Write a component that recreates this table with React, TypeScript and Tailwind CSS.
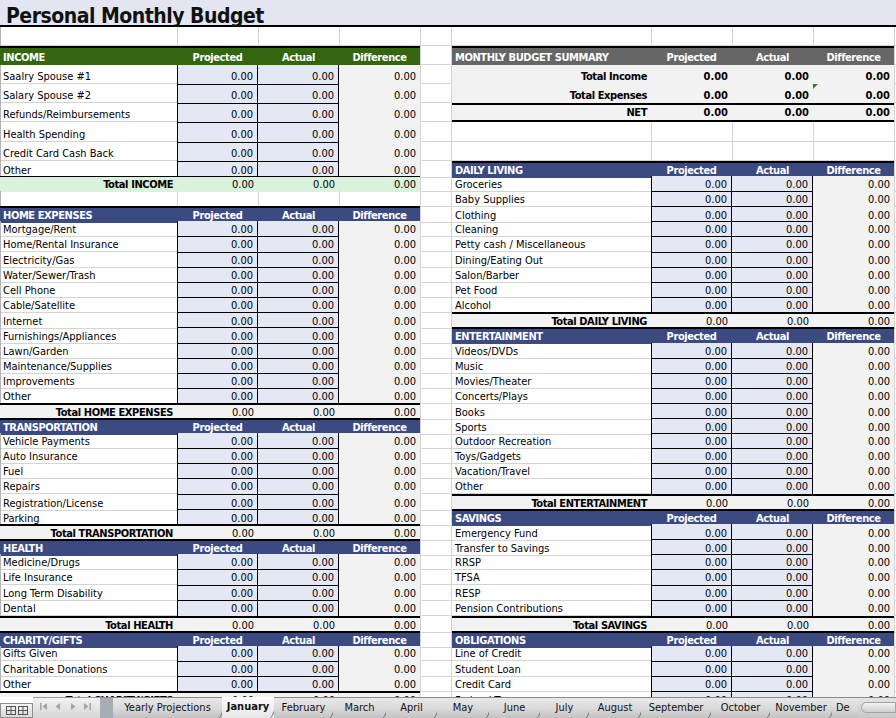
type Tone = "green" | "blue" | "gray";
type Half =
  | { t: "head"; title: string; tone: Tone }
  | { t: "item"; label: string; first?: boolean }
  | { t: "total"; label: string; green?: boolean }
  | { t: "sum"; label: string; net?: boolean; flag?: boolean }
  | { t: "blank" };

const H: Record<number, string> = {
  15: "h-[15px]",
  16: "h-[16px]",
  19: "h-[19px]",
  20: "h-[20px]",
};

const TONES: Record<Tone, string> = {
  green: "bg-[#34650f]",
  blue: "bg-[#3b4a81]",
  gray: "bg-[#666666]",
};

const hd = (title: string, tone: Tone = "blue"): Half => ({ t: "head", title, tone });
const it = (label: string, first = false): Half => ({ t: "item", label, first });
const tot = (label: string, green = false): Half => ({ t: "total", label, green });
const blank: Half = { t: "blank" };

// rows 2..44, left block then right block
const rows: [number, Half, Half][] = [
  [19, blank, blank],
  [19, hd("INCOME", "green"), hd("MONTHLY BUDGET SUMMARY", "gray")],
  [19, it("Saalry Spouse #1", true), { t: "sum", label: "Total Income" }],
  [19, it("Salary Spouse #2"), { t: "sum", label: "Total Expenses", flag: true }],
  [19, it("Refunds/Reimbursements"), { t: "sum", label: "NET", net: true }],
  [20, it("Health Spending"), blank],
  [19, it("Credit Card Cash Back"), blank],
  [15, it("Other"), hd("DAILY LIVING")],
  [15, tot("Total INCOME", true), it("Groceries", true)],
  [15, blank, it("Baby Supplies")],
  [15, hd("HOME EXPENSES"), it("Clothing")],
  [15, it("Mortgage/Rent", true), it("Cleaning")],
  [16, it("Home/Rental Insurance"), it("Petty cash / Miscellaneous")],
  [15, it("Electricity/Gas"), it("Dining/Eating Out")],
  [15, it("Water/Sewer/Trash"), it("Salon/Barber")],
  [15, it("Cell Phone"), it("Pet Food")],
  [15, it("Cable/Satellite"), it("Alcohol")],
  [15, it("Internet"), tot("Total DAILY LIVING")],
  [16, it("Furnishings/Appliances"), hd("ENTERTAINMENT")],
  [15, it("Lawn/Garden"), it("Videos/DVDs", true)],
  [15, it("Maintenance/Supplies"), it("Music")],
  [15, it("Improvements"), it("Movies/Theater")],
  [15, it("Other"), it("Concerts/Plays")],
  [15, tot("Total HOME EXPENSES"), it("Books")],
  [15, hd("TRANSPORTATION"), it("Sports")],
  [15, it("Vehicle Payments", true), it("Outdoor Recreation")],
  [15, it("Auto Insurance"), it("Toys/Gadgets")],
  [15, it("Fuel"), it("Vacation/Travel")],
  [16, it("Repairs"), it("Other")],
  [15, it("Registration/License"), tot("Total ENTERTAINMENT")],
  [15, it("Parking"), hd("SAVINGS")],
  [15, tot("Total TRANSPORTATION"), it("Emergency Fund", true)],
  [15, hd("HEALTH"), it("Transfer to Savings")],
  [15, it("Medicine/Drugs", true), it("RRSP")],
  [16, it("Life Insurance"), it("TFSA")],
  [15, it("Long Term Disability"), it("RESP")],
  [16, it("Dental"), it("Pension Contributions")],
  [15, tot("Total HEALTH"), tot("Total SAVINGS")],
  [15, hd("CHARITY/GIFTS"), hd("OBLIGATIONS")],
  [15, it("Gifts Given", true), it("Line of Credit", true)],
  [15, it("Charitable Donations"), it("Student Loan")],
  [15, it("Other"), it("Credit Card")],
  [15, tot("Total CHARITY/GIFTS"), it("Federal Taxes")],
];

const num = "flex items-end justify-end pr-[4px]";
const bold = "font-bold text-[11px] tracking-[-0.4px]";

function renderHalf(c: Half, side: "L" | "R", k: string) {
  const isL = side === "L";
  switch (c.t) {
    case "head": {
      const base = `${TONES[c.tone]} border-t-2 border-black text-white ${bold} flex items-end`;
      return [
        <div key={k + "a"} className={`${base} pl-[3px] whitespace-nowrap`}>{c.title}</div>,
        <div key={k + "b"} className={`${base} justify-center`}>Projected</div>,
        <div key={k + "c"} className={`${base} justify-center`}>Actual</div>,
        <div key={k + "d"} className={`${base} justify-center`}>Difference</div>,
      ];
    }
    case "item": {
      const top = c.first ? "" : "border-t";
      return [
        <div
          key={k + "a"}
          className={`${isL ? "shadow-[inset_1px_0_0_#b4b4b4,inset_0_-1px_0_#d4d4d4]" : "shadow-[inset_0_-1px_0_#d4d4d4]"} flex items-end pl-[3px] whitespace-nowrap`}
        >
          {c.label}
        </div>,
        <div key={k + "b"} className={`bg-[#e4e8f4] border-x border-black ${top} ${num}`}>0.00</div>,
        <div key={k + "c"} className={`bg-[#e4e8f4] border-r border-black ${top} ${num}`}>0.00</div>,
        <div key={k + "d"} className={`bg-[#f2f2f2] ${num}`}>0.00</div>,
      ];
    }
    case "total": {
      const base = c.green ? "bg-[#d9f2db] border-t border-black" : "bg-[#f2f2f2] border-t-2 border-black";
      return [
        <div key={k + "a"} className={`${base} ${num} ${bold} whitespace-nowrap`}>{c.label}</div>,
        <div key={k + "b"} className={`${base} ${num}`}>0.00</div>,
        <div key={k + "c"} className={`${base} ${num}`}>0.00</div>,
        <div key={k + "d"} className={`${base} ${num}`}>0.00</div>,
      ];
    }
    case "sum": {
      const base = `bg-[#f2f2f2] font-bold ${c.net ? "border-t-2 border-b-2 border-black" : ""} ${num}`;
      return [
        <div key={k + "a"} className={`${base} tracking-[-0.4px]`}>{c.label}</div>,
        <div key={k + "b"} className={base}>0.00</div>,
        <div key={k + "c"} className={base}>0.00</div>,
        <div key={k + "d"} className={`${base} relative`}>
          {c.flag && (
            <svg className="absolute left-0 top-0" width="5" height="5" viewBox="0 0 5 5">
              <polygon points="0,0 5,0 0,5" fill="#47761a" />
            </svg>
          )}
          0.00
        </div>,
      ];
    }
    default:
      return [
        <div
          key={k + "a"}
          className={isL ? "shadow-[inset_1px_0_0_#b4b4b4,inset_0_-1px_0_#d4d4d4]" : "shadow-[inset_0_-1px_0_#d4d4d4]"}
        />,
        <div key={k + "b"} className="shadow-[inset_1px_0_0_#d4d4d4,inset_0_-1px_0_#d4d4d4]" />,
        <div key={k + "c"} className="shadow-[inset_1px_0_0_#d4d4d4,inset_0_-1px_0_#d4d4d4]" />,
        <div key={k + "d"} className="shadow-[inset_1px_0_0_#d4d4d4,inset_0_-1px_0_#d4d4d4]" />,
      ];
  }
}

const TABS: [string, string][] = [
  ["Yearly Projections", "w-[109px]"],
  ["January", "w-[52px]"],
  ["February", "w-[59px]"],
  ["March", "w-[53px]"],
  ["April", "w-[51px]"],
  ["May", "w-[52px]"],
  ["June", "w-[51px]"],
  ["July", "w-[49px]"],
  ["August", "w-[52px]"],
  ["September", "w-[70px]"],
  ["October", "w-[59px]"],
  ["November", "w-[62px]"],
  ["De", "w-[25px]"],
];

function TabBar() {
  return (
    <div className="flex h-[21px] text-[11px] text-[#111]">
      <div className="w-[33px] flex flex-col">
        <div className="h-[6px] bg-white" />
        <div className="flex-1 flex items-center justify-center border border-[#8f8f8f] bg-gradient-to-b from-[#f4f4f4] to-[#d9d9d9]">
          <svg width="22" height="9" viewBox="0 0 22 9" fill="none" stroke="#555" strokeWidth="1">
            <rect x="0.5" y="0.5" width="9" height="8" />
            <path d="M5 0.5V8.5M0.5 4.5H9.5" />
            <rect x="12.5" y="0.5" width="9" height="8" />
            <path d="M17 0.5V8.5M12.5 4.5H21.5" />
          </svg>
        </div>
      </div>
      <div className="w-[67px] flex items-start pt-[5px] pl-[7px] border-t border-[#9a9a9a] bg-gradient-to-b from-[#f2f2f2] to-[#d6d6d6]">
        <svg width="52" height="7" viewBox="0 0 52 7" fill="#a4a4a4">
          <rect x="0" y="0" width="1.5" height="7" />
          <polygon points="7,0 7,7 2.5,3.5" />
          <polygon points="20,0 20,7 15.5,3.5" />
          <polygon points="31,0 31,7 35.5,3.5" />
          <polygon points="44,0 44,7 48.5,3.5" />
          <rect x="49.5" y="0" width="1.5" height="7" />
        </svg>
      </div>
      <div className="w-[13px] border-t border-[#8a8a8a] bg-[#a7acb7]" />
      {TABS.map(([name, w], i) => {
        const active = name === "January";
        const last = i === TABS.length - 1;
        return (
          <div
            key={name}
            className={`relative ${w} h-full flex items-start pt-[2px] whitespace-nowrap ${
              last ? "justify-start pl-[4px] overflow-hidden" : "justify-center"
            } ${
              active
                ? "bg-gradient-to-b from-[#fcfcfc] to-[#e6e6e6] font-bold"
                : "border-t border-[#8a8a8a] bg-gradient-to-b from-[#e8e8e8] via-[#dadada] to-[#c2c2c2]"
            }`}
          >
            {name}
            {!last && (
              <svg className="absolute right-[-3px] top-0" width="7" height="21" viewBox="0 0 7 21" fill="none">
                <path d="M0.5 20.5 Q5 18 6.5 0" stroke="#6e6e6e" strokeWidth="1" />
              </svg>
            )}
          </div>
        );
      })}
      <div className="flex-1 flex items-start pt-[4px] border-t border-[#8a8a8a] bg-gradient-to-b from-[#e4e4e4] to-[#c8c8c8]">
        <div className="ml-[4px] w-full h-[11px] rounded-l-full border border-[#a2a2a2] bg-gradient-to-b from-[#f4f4f4] to-[#cfcfcf]" />
      </div>
    </div>
  );
}

export default function App() {
  return (
    <div className="w-[896px] h-[718px] overflow-hidden bg-white text-black font-['DejaVu_Sans_Condensed','DejaVu_Sans',sans-serif] text-[11px] leading-[15px]">
      <div className="h-[697px] overflow-hidden">
        {/* title band */}
        <div className="h-[27px] bg-[#e3e6f0] border-b-2 border-black flex items-end pl-[6px]">
          <span className="text-[21px] leading-[18px] font-bold tracking-[-0.5px] text-[#111]">Personal Monthly Budget</span>
        </div>
        {rows.map(([h, l, r], i) => (
          <div
            key={i}
            className={`grid grid-cols-[177px_81px_81px_81px_32px_199px_81px_81px_81px_2px] ${H[h]}`}
          >
            {renderHalf(l, "L", "l" + i)}
            <div className="shadow-[inset_1px_0_0_#d4d4d4,inset_-1px_0_0_#d4d4d4,inset_0_-1px_0_#d4d4d4]" />
            {renderHalf(r, "R", "r" + i)}
            <div className="shadow-[inset_1px_0_0_#d4d4d4,inset_0_-1px_0_#d4d4d4]" />
          </div>
        ))}
      </div>
      <TabBar />
    </div>
  );
}
